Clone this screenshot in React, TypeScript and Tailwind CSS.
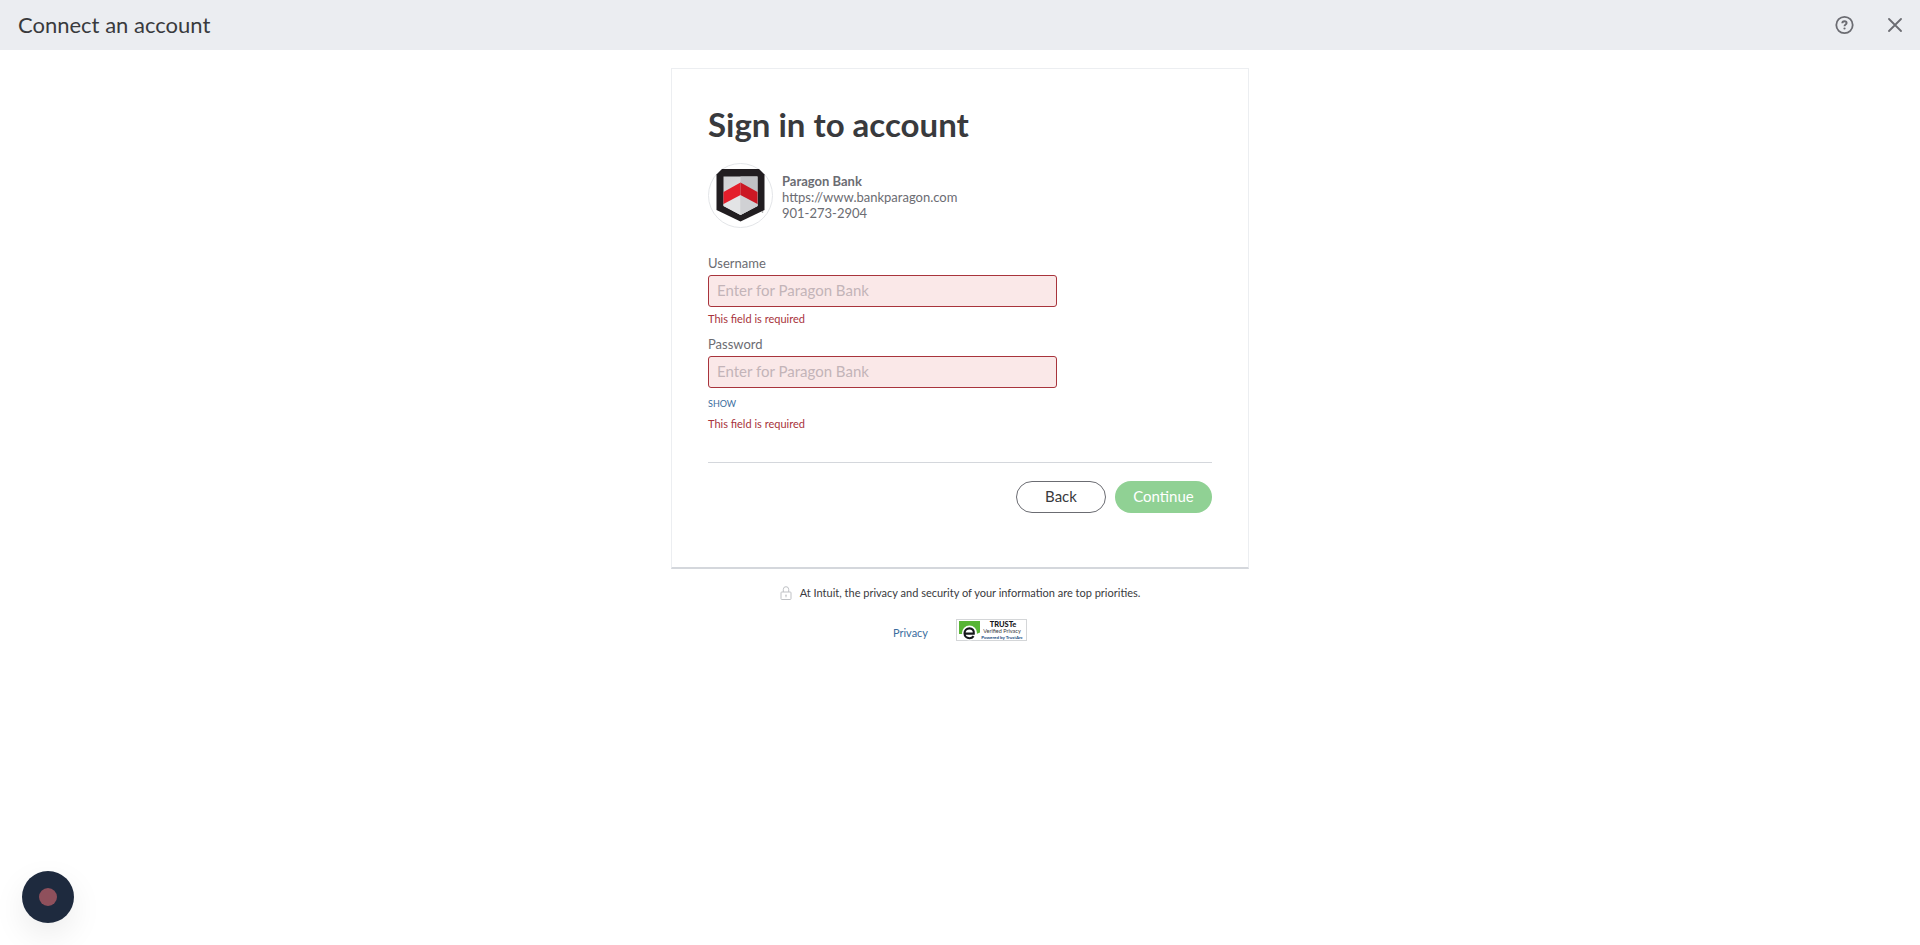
import React, { useState } from 'react';

interface FieldProps {
  id: string;
  label: string;
  type: string;
  value: string;
  onChange: (value: string) => void;
  children?: React.ReactNode;
}

function Field({ id, label, type, value, onChange, children }: FieldProps) {
  return (
    <div className="flex flex-col items-start">
      <label htmlFor={id} className="text-[13px] leading-4 text-[#6b6c72]">
        {label}
      </label>
      <input
        id={id}
        type={type}
        value={value}
        onChange={(e) => onChange(e.target.value)}
        placeholder="Enter for Paragon Bank"
        aria-invalid={!value}
        className="mt-1 h-8 w-full max-w-[349px] rounded-[3px] border border-[#a8343c] bg-[#fae8e8] px-2 pb-[2px] text-[15px] text-[#393a3d] outline-none placeholder:text-[#c3b4b8]"
      />
      {children}
      {!value && (
        <p role="alert" className="mt-1 text-[11px] leading-4 text-[#a8343c]">
          This field is required
        </p>
      )}
    </div>
  );
}

function HelpIcon() {
  return (
    <svg viewBox="0 0 20 20" className="h-5 w-5" fill="none" stroke="#6b6c72">
      <circle cx="10.5" cy="10" r="8.2" strokeWidth="1.8" />
      <path d="M8.300 8.200c0-1.200.9-2 2.200-2s2.100.8 2.100 1.800c0 1.500-2.100 1.500-2.100 3.200" strokeWidth="1.9" />
      <circle cx="10.500" cy="13.500" r="1.100" fill="#6b6c72" stroke="none" />
    </svg>
  );
}

function CloseIcon() {
  return (
    <svg viewBox="0 0 14 14" className="h-[14px] w-[14px]" fill="none" stroke="#6b6c72" strokeWidth="1.8" strokeLinecap="round">
      <path d="M1 1l12 12M13 1L1 13" />
    </svg>
  );
}

function BankLogo() {
  return (
    <svg viewBox="0 0 65 65" className="h-[65px] w-[65px] shrink-0">
      <defs>
        <linearGradient id="steel" x1="0" y1="0" x2="1" y2="1">
          <stop offset="0" stopColor="#cfd0d3" />
          <stop offset="1" stopColor="#eeeeef" />
        </linearGradient>
      </defs>
      <circle cx="32.5" cy="32.5" r="32" fill="#fff" stroke="#e3e5e8" />
      <path d="M14 6h37l5.500 5.500V47L32.500 58.500 8.500 47V11.500z" fill="#211d20" />
      <path d="M15.500 13.500h34V43l-17 9-17-9z" fill="url(#steel)" />
      <path d="M32.500 13.500h17V43l-17 9z" fill="#bfc1c4" />
      <path d="M15.500 41l17-9v20l-17-9z" fill="#e3e4e6" />
      <path d="M49.500 41l-17-9v20l17-9z" fill="#d0d1d4" />
      <path d="M15.500 29l17-9.500v12.500l-17 9z" fill="#e41e2b" />
      <path d="M49.500 29l-17-9.500v12.500l17 9z" fill="#cb1824" />
      <circle cx="54.500" cy="49" r=".8" fill="#888" />
    </svg>
  );
}

function LockIcon() {
  return (
    <svg viewBox="0 0 12 14" className="h-[14px] w-3" fill="none" stroke="#bfc1c5">
      <rect x="1" y="6" width="10" height="7.500" rx=".8" />
      <path d="M3.300 6V3.400a2.700 2.700 0 0 1 5.400 0V6" />
      <circle cx="6" cy="9.200" r=".8" fill="#bfc1c5" stroke="none" />
      <path d="M6 9.500v1.800" />
    </svg>
  );
}

function TrusteBadge() {
  return (
    <svg viewBox="0 0 71 22" className="h-[22px] w-[71px]" role="img" aria-label="TRUSTe Verified Privacy">
      <rect x=".5" y=".5" width="70" height="21" fill="#fff" stroke="#d4d6d8" />
      <path d="M3 2h21v11.500l-3.500 1.500H3z" fill="#58b535" />
      <circle cx="13.500" cy="14" r="7.500" fill="#fff" />
      <path d="M9.200 14.600h8.600c.5-3.200-1.600-5.200-4.300-5.200-2.900 0-5 2-5 4.900s2.100 4.900 5 4.900c1.900 0 3.200-.8 4.100-2.100" fill="none" stroke="#15171a" strokeWidth="2.100" />
      <g fontFamily="Lato, sans-serif" textAnchor="middle">
        <text x="47" y="7.500" fontSize="7.500" fontWeight="900" fill="#15171a">TRUSTe</text>
        <text x="46" y="13.500" fontSize="5.500" fill="#393a3d">Verified Privacy</text>
        <text x="46" y="20" fontSize="4.500" fontWeight="700" fill="#1d4f82">Powered by TrustArc</text>
      </g>
    </svg>
  );
}

export default function App() {
  const [username, setUsername] = useState('');
  const [password, setPassword] = useState('');
  const [visible, setVisible] = useState(false);

  return (
    <div className="flex min-h-screen flex-col bg-white font-['Lato',sans-serif] text-[#393a3d]">
      <header className="flex h-[50px] items-center justify-between bg-[#ebedf1] px-[18px]">
        <h1 className="text-[22px] leading-7">Connect an account</h1>
        <div className="flex items-center gap-[34px]">
          <button type="button" aria-label="Help">
            <HelpIcon />
          </button>
          <button type="button" aria-label="Close">
            <CloseIcon />
          </button>
        </div>
      </header>

      <main className="flex flex-col items-center px-4 pt-[18px]">
        <form
          noValidate
          onSubmit={(e) => e.preventDefault()}
          className="w-full max-w-[578px] border border-b-2 border-[#eceef1] border-b-[#d4d7dc] px-9 pt-[35px] pb-[54px]"
        >
          <h2 className="text-[33px] leading-10 font-bold">Sign in to account</h2>

          {/* Institution */}
          <div className="mt-[19px] flex items-center gap-[9px]">
            <BankLogo />
            <div className="pt-[2px] text-[13px] leading-4 text-[#6b6c72]">
              <p className="font-bold">Paragon Bank</p>
              <p>https://www.bankparagon.com</p>
              <p>901-273-2904</p>
            </div>
          </div>

          {/* Credentials */}
          <div className="mt-[27px] flex flex-col gap-[9px]">
            <Field id="username" label="Username" type="text" value={username} onChange={setUsername} />
            <Field
              id="password"
              label="Password"
              type={visible ? 'text' : 'password'}
              value={password}
              onChange={setPassword}
            >
              <button
                type="button"
                onClick={() => setVisible(!visible)}
                className="mt-2 text-[9px] leading-4 text-[#3a6d9e]"
              >
                {visible ? 'HIDE' : 'SHOW'}
              </button>
            </Field>
          </div>

          <div className="mt-[30px] flex justify-end gap-[9px] border-t border-[#d4d7dc] pt-[18px]">
            <button type="button" className="h-8 w-[90px] rounded-full border border-[#6b6c72] pb-[2px] text-[15px]">
              Back
            </button>
            <button type="submit" className="h-8 w-[97px] rounded-full bg-[#90d194] pb-[2px] text-[15px] text-white">
              Continue
            </button>
          </div>
        </form>

        <footer className="flex flex-col items-center">
          <p className="mt-4 flex items-center gap-2 text-[11px] leading-4">
            <LockIcon />
            At Intuit, the privacy and security of your information are top priorities.
          </p>
          <div className="mt-[18px] flex items-end gap-7">
            <a href="#privacy" className="text-[11px] leading-4 text-[#3a6d9e]">
              Privacy
            </a>
            <a href="#truste">
              <TrusteBadge />
            </a>
          </div>
        </footer>
      </main>

      {/* Screen recorder */}
      <button
        type="button"
        aria-label="Record"
        className="fixed bottom-[22px] left-[22px] flex h-[52px] w-[52px] items-center justify-center rounded-full bg-[#1e2a3e] shadow-[0_12px_32px_rgba(0,0,0,0.08)]"
      >
        <span className="h-[18px] w-[18px] rounded-full bg-[#8f505c]" />
      </button>
    </div>
  );
}
